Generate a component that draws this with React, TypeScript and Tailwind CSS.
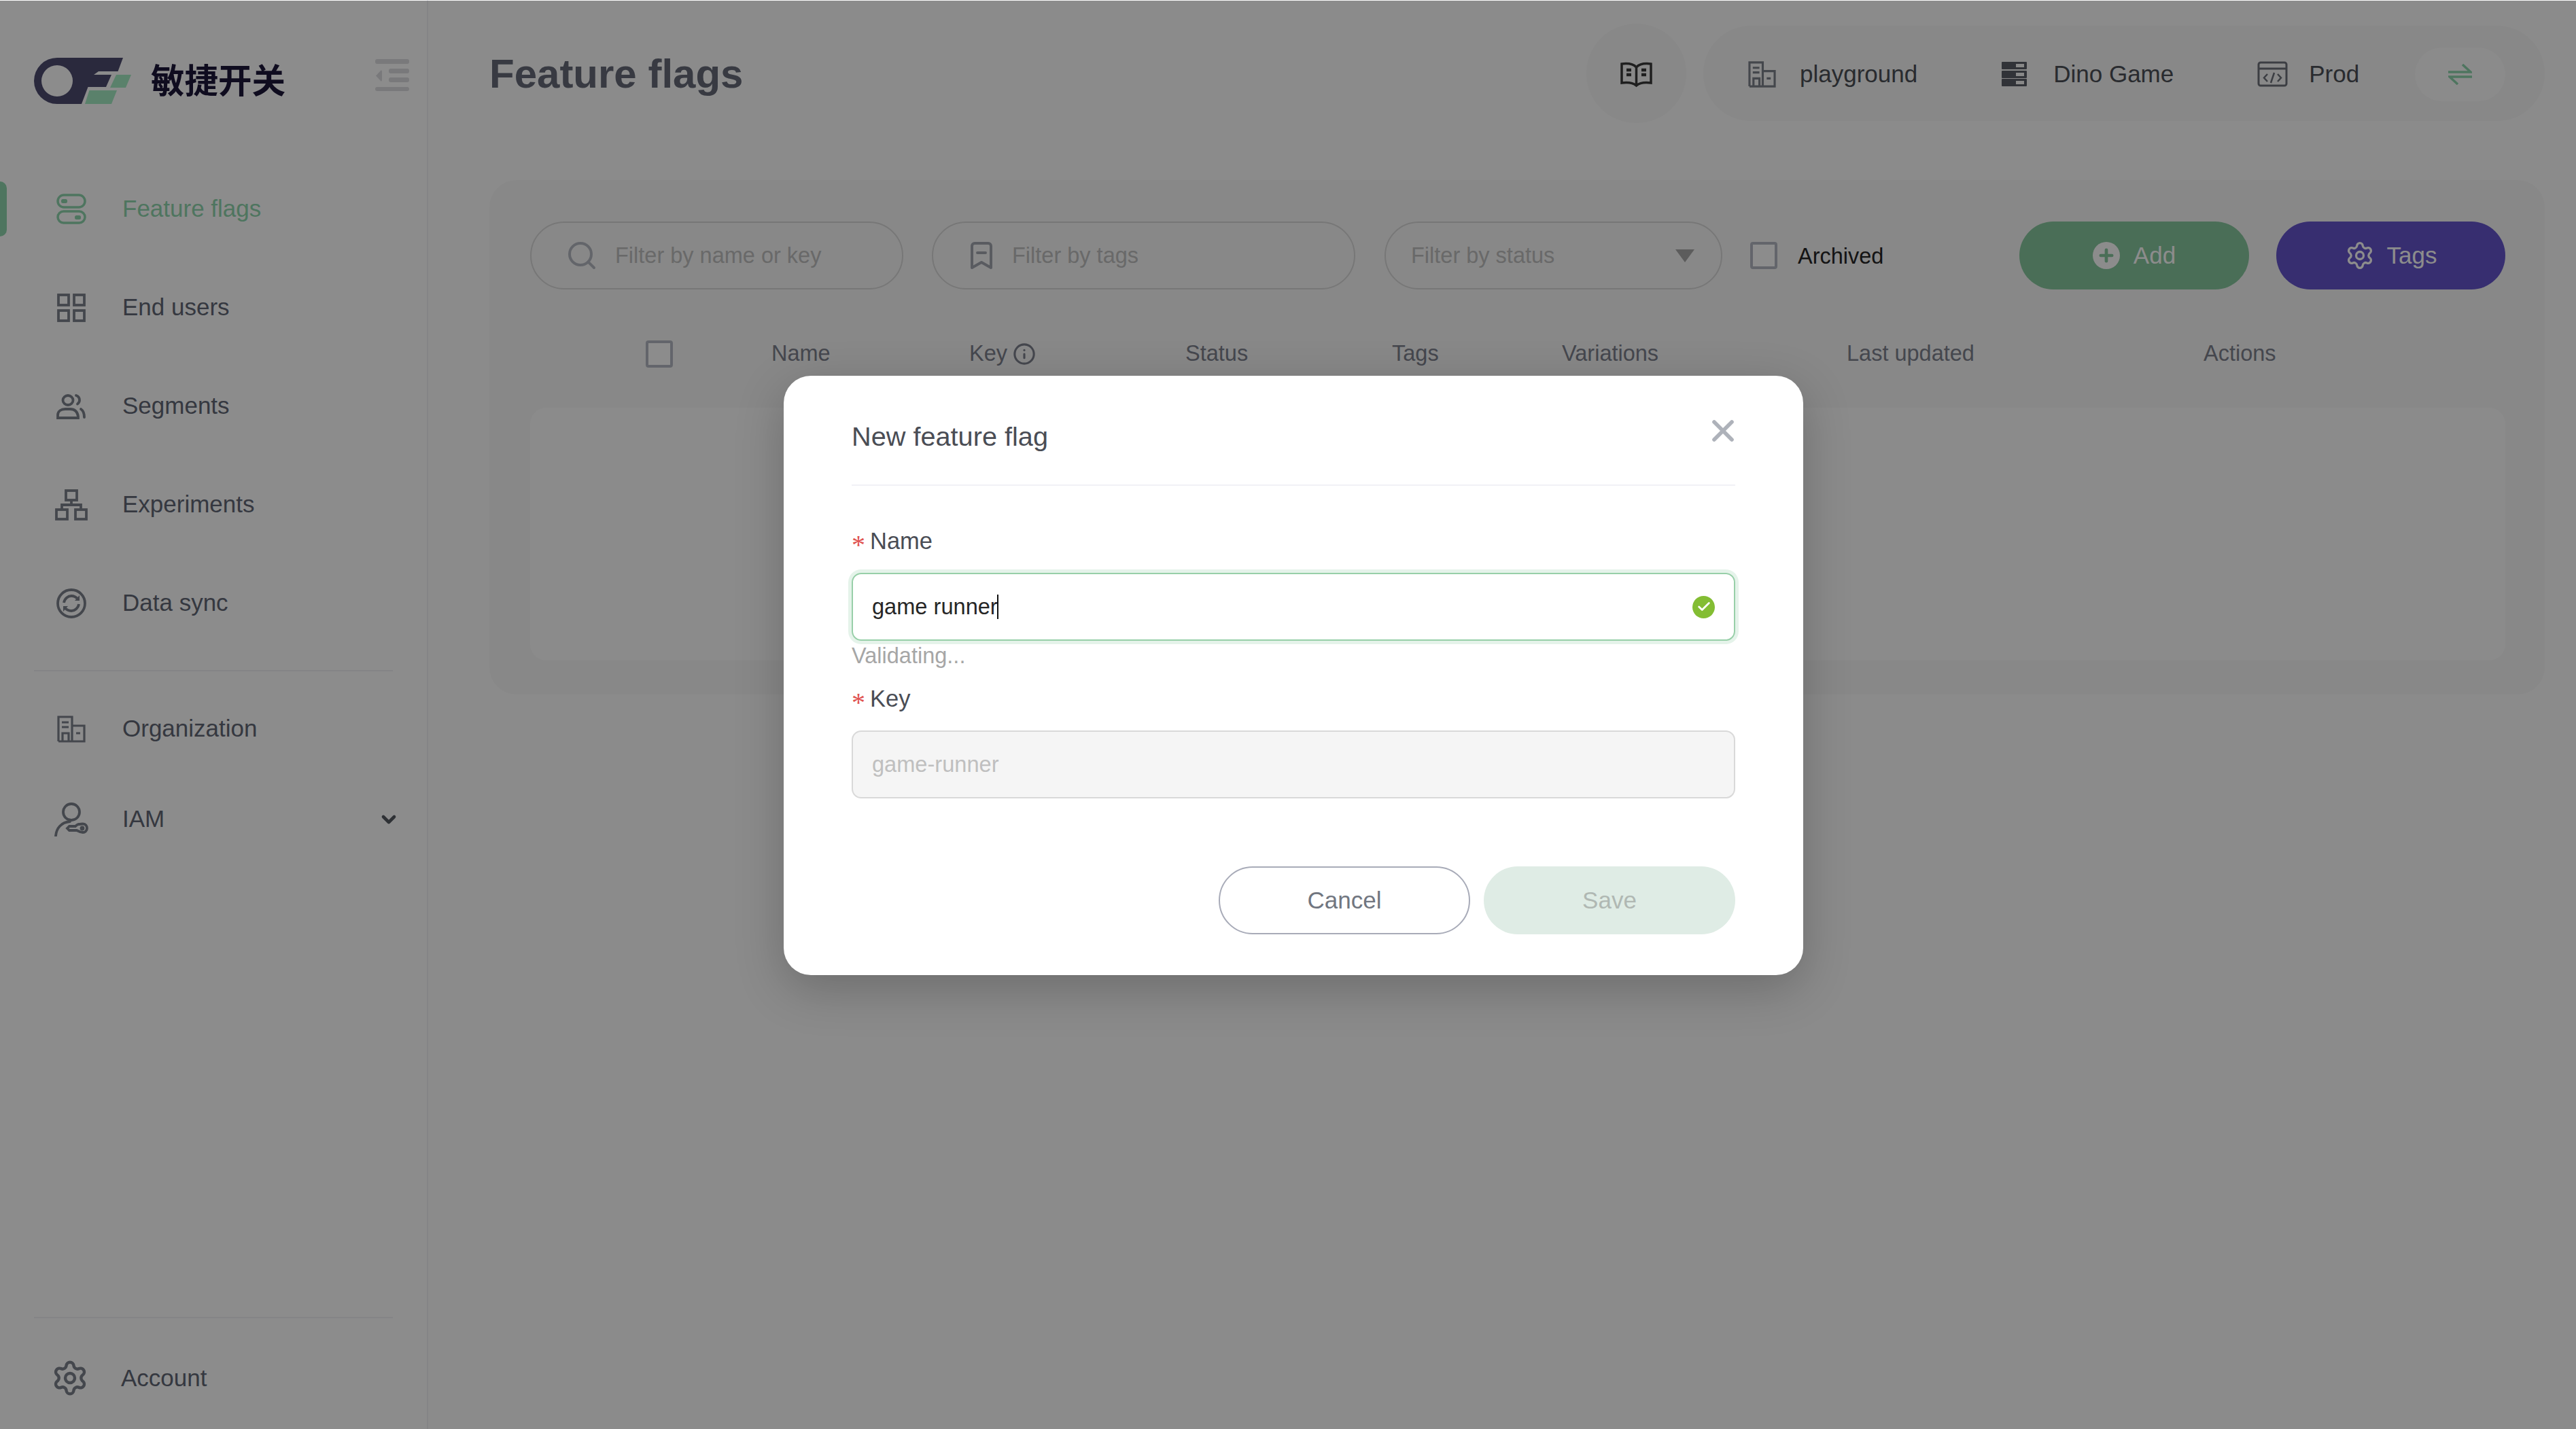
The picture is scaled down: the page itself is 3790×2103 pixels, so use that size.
import React from "react";
import { Search, BookmarkMinus, Settings, X, ChevronDown, Info, Plus, Check } from "lucide-react";

const FlagIcon = () => (
  <svg width="44" height="45" viewBox="0 0 44 45" fill="none">
    <rect x="2" y="2" width="40" height="18" rx="9" stroke="currentColor" strokeWidth="3.5" />
    <rect x="7" y="8" width="9" height="6" rx="2.5" fill="currentColor" />
    <rect x="2" y="26" width="40" height="17" rx="8.5" stroke="currentColor" strokeWidth="3.5" />
    <rect x="27" y="32" width="9" height="6" rx="2.5" fill="currentColor" />
  </svg>
);
const GridIcon = () => (
  <svg width="44" height="42" viewBox="0 0 44 42" fill="none" stroke="currentColor" strokeWidth="3.8">
    <rect x="3" y="2" width="15" height="15" />
    <rect x="26" y="2" width="15" height="15" />
    <rect x="3" y="25" width="15" height="15" />
    <rect x="26" y="25" width="15" height="15" />
  </svg>
);
const UsersIcon = () => (
  <svg width="44" height="38" viewBox="0 0 44 38" fill="none" stroke="currentColor" strokeWidth="3.8" strokeLinecap="round">
    <ellipse cx="17" cy="10" rx="7.5" ry="7" />
    <path d="M2 36v-4c0-6 5-9 11-9h7c7 0 11 4 12 11v2z" />
    <path d="M29 3c3 1 5 3.500 5 7 0 2-1 4-3 5.500" />
    <path d="M36 23c3 2 5 6 5 12" />
  </svg>
);
const TreeIcon = () => (
  <svg width="48" height="46" viewBox="0 0 48 46" fill="none" stroke="currentColor" strokeWidth="3.8">
    <rect x="16" y="2" width="16" height="14" />
    <rect x="2" y="30" width="16" height="14" />
    <rect x="30" y="30" width="16" height="14" />
    <path d="M24 16v7M10 30v-7h28v7" />
  </svg>
);
const SyncIcon = () => (
  <svg width="44" height="44" viewBox="0 0 44 44" fill="none" stroke="currentColor" strokeWidth="3.8">
    <circle cx="22" cy="22" r="20" />
    <path d="M11 21c1-6 6-10 11-10 4 0 7 1.500 10 5" />
    <path d="M33 23c-1 6-6 10-11 10-4 0-7-1.500-10-5" />
    <path d="M34 10v8h-7zM10 34v-8h7z" fill="currentColor" stroke="none" />
  </svg>
);
const OrgIcon = ({ w = 42, h = 40 }: { w?: number; h?: number }) => (
  <svg width={w} height={h} viewBox="0 0 42 40" fill="none" stroke="currentColor" strokeWidth="3.200">
    <path d="M2 38V2h20v36" />
    <path d="M22 15h18v23H2" />
    <path d="M7 10h10M7 17h10M8 38V26h9v12M28 26h6" />
  </svg>
);
const IamIcon = () => (
  <svg width="50" height="50" viewBox="0 0 50 50" fill="none" stroke="currentColor" strokeWidth="3.800" strokeLinecap="round">
    <circle cx="25" cy="14" r="12" />
    <path d="M2 49c1-11 8-20 21-21" />
    <path d="M36 32c2 0 4-.5 6-.500 4 0 6 3 6 6.500s-3 6-6 6c-4 0-7-2-9-3H22l-3-3 3-3h9c1-1 3-3 5-3z" />
    <circle cx="41" cy="38" r="1.500" fill="currentColor" />
  </svg>
);
const BookIcon = () => (
  <svg width="47" height="38" viewBox="0 0 47 38" fill="none" stroke="currentColor" strokeWidth="3.500">
    <path d="M23.500 8C19 3 10 2 2 3v28c8-1 17 0 21.500 4C28 31 37 30 45 31V3c-8-1-17 0-21.500 5zM23.500 8v27" />
    <path d="M9 12h7M9 19h7M31 12h7M31 19h7" strokeWidth="4.500" />
  </svg>
);
const ServerIcon = () => (
  <svg width="37" height="36" viewBox="0 0 37 36" fill="currentColor">
    <path fillRule="evenodd" d="M1 0h35a1 1 0 0 1 1 1v9a1 1 0 0 1-1 1H1a1 1 0 0 1-1-1V1a1 1 0 0 1 1-1zm20 3v5h12V3zM1 13h35a1 1 0 0 1 1 1v9a1 1 0 0 1-1 1H1a1 1 0 0 1-1-1v-9a1 1 0 0 1 1-1zm20 3v5h12v-5zM1 25h35a1 1 0 0 1 1 1v9a1 1 0 0 1-1 1H1a1 1 0 0 1-1-1v-9a1 1 0 0 1 1-1zm20 3v5h12v-5z" />
  </svg>
);
const CodeWinIcon = () => (
  <svg width="45" height="38" viewBox="0 0 45 38" fill="none" stroke="currentColor" strokeWidth="3">
    <rect x="2" y="2" width="41" height="34" rx="3" />
    <path d="M2 11h41" />
    <path d="M15 19l-5 5.500 5 5.500M30 19l5 5.500-5 5.500M25 17l-5 15" strokeWidth="2.500" />
  </svg>
);
const SwapIcon = () => (
  <svg width="35" height="31" viewBox="0 0 35 31" fill="none" stroke="currentColor" strokeWidth="3.500">
    <path d="M0 12h33L21 1M35 19H2l12 11" />
  </svg>
);

const Logo = () => (
  <svg width="143" height="68" viewBox="50 85 143 68">
    <path
      fillRule="evenodd"
      fill="#4e4c70"
      d="M84 85H181L173.500 105H145L138 110H164L156 128H129.500L120 153H84A34 34 0 0 1 84 85ZM84 96A23 23 0 1 0 84 142A23 23 0 1 0 84 96Z"
    />
    <path fill="#a5ecc3" d="M171 110H193L185 129H162ZM131.400 133H172L164 153H125Z" />
  </svg>
);

const CollapseIcon = () => (
  <svg width="50" height="47" viewBox="0 0 50 47" fill="#dcdce0">
    <rect x="0" y="0" width="50" height="7" rx="3" />
    <rect x="20" y="14" width="30" height="7" rx="3" />
    <rect x="20" y="27" width="30" height="7" rx="3" />
    <rect x="0" y="41" width="50" height="6" rx="3" />
    <path d="M9 16L1 24.500 9 33 10 31V18z" />
  </svg>
);

function NavItem({
  icon,
  label,
  active,
  heightClass,
  trailing,
}: {
  icon: React.ReactNode;
  label: string;
  active?: boolean;
  heightClass: string;
  trailing?: React.ReactNode;
}) {
  return (
    <div
      className={`relative flex items-center pl-[83px] pr-[40px] text-[35px] ${heightClass} ${
        active ? "text-[#8fd6ae]" : "text-[#626775]"
      }`}
    >
      {active && <div className="absolute left-0 top-[32px] h-[81px] w-[10px] rounded-r-[10px] bg-[#8fd6ae]" />}
      <div className={`flex h-[50px] w-[44px] items-center justify-center [&>svg]:shrink-0 ${active ? "text-[#8fd6ae]" : "text-[#7d828c]"}`}>{icon}</div>
      <span className="ml-[53px]">{label}</span>
      {trailing && <div className="ml-auto">{trailing}</div>}
    </div>
  );
}

function Sidebar() {
  return (
    <aside className="flex h-full w-[630px] shrink-0 flex-col border-r-2 border-[#f0f0f4] bg-white">
      <div className="flex h-[235px] shrink-0 items-start pl-[50px] pr-[26px] pt-[85px]">
        <Logo />
        <span className="ml-[29px] mt-[2px] font-['Noto_Sans_CJK_SC',sans-serif] text-[49.500px] font-bold leading-[58px] text-[#1d163a]">
          敏捷开关
        </span>
        <div className="ml-auto mt-[2px]">
          <CollapseIcon />
        </div>
      </div>
      <NavItem active heightClass="h-[145px]" icon={<FlagIcon />} label="Feature flags" />
      <NavItem heightClass="h-[145px]" icon={<GridIcon />} label="End users" />
      <NavItem heightClass="h-[145px]" icon={<UsersIcon />} label="Segments" />
      <NavItem heightClass="h-[145px]" icon={<TreeIcon />} label="Experiments" />
      <NavItem heightClass="h-[145px]" icon={<SyncIcon />} label="Data sync" />
      <div className="mx-[50px] mt-[26px] h-[2px] bg-[#f0f0f4]" />
      <div className="h-[18px]" />
      <NavItem heightClass="h-[133px]" icon={<OrgIcon />} label="Organization" />
      <NavItem
        heightClass="h-[133px]"
        icon={<IamIcon />}
        label="IAM"
        trailing={<ChevronDown size={32} strokeWidth={3.5} className="text-[#555962]" />}
      />
      <div className="mx-[50px] mt-auto h-[2px] bg-[#f0f0f4]" />
      <div className="flex h-[163px] shrink-0 items-start pl-[80px] pt-[66px]">
        <div className="flex h-[44px] w-[46px] items-center justify-center text-[#7d828c]">
          <Settings size={56} strokeWidth={1.9} className="shrink-0" />
        </div>
        <span className="ml-[52px] text-[35px] leading-[44px] text-[#626775]">Account</span>
      </div>
    </aside>
  );
}

function Header() {
  return (
    <header className="flex h-[140px] items-center">
      <h1 className="pt-[2px] text-[60px] font-bold text-[#666b79]">Feature flags</h1>
      <div className="ml-auto flex h-[146px] w-[147px] items-center justify-center rounded-full bg-[#f7f7f7] pt-[3px] text-[#3a3a3a]">
        <BookIcon />
      </div>
      <div className="ml-[25px] flex h-[140px] w-[1238px] items-center rounded-full bg-[#f7f7f7] pl-[66px] pt-[2px] text-[35px] text-[#4b4f56]">
        <span className="text-[#7d818b]">
          <OrgIcon w={41} h={41} />
        </span>
        <span className="ml-[35px]">playground</span>
        <span className="ml-[124px] text-[#5a5e66]">
          <ServerIcon />
        </span>
        <span className="ml-[39px]">Dino Game</span>
        <span className="ml-[123px] text-[#6e727b]">
          <CodeWinIcon />
        </span>
        <span className="ml-[31px]">Prod</span>
        <div className="ml-[82px] flex h-[79px] w-[133px] items-center justify-center rounded-[40px] bg-[#fdfdfd] text-[#8fd6ae]">
          <SwapIcon />
        </div>
      </div>
    </header>
  );
}

function FilterBox({ widthClass, children }: { widthClass: string; children: React.ReactNode }) {
  return (
    <div className={`flex h-[100px] shrink-0 items-center rounded-full border-2 border-[#d9d9d9] text-[32.500px] text-[#bfbfbf] ${widthClass}`}>
      {children}
    </div>
  );
}

function Panel() {
  const columns = ["Name", "Key", "Status", "Tags", "Variations", "Last updated", "Actions"];
  return (
    <section className="mt-[87px] flex h-[757px] flex-col rounded-[40px] bg-[#f8f8f8] pl-[60px] pr-[58px] pt-[61px]">
      <div className="flex h-[100px] items-center">
        <FilterBox widthClass="w-[549px] pl-[50px]">
          <Search size={48} strokeWidth={2} className="text-[#b5b9c2]" />
          <span className="ml-[25px]">Filter by name or key</span>
        </FilterBox>
        <FilterBox widthClass="ml-[42px] w-[623px] pl-[47px]">
          <BookmarkMinus size={48} strokeWidth={2} className="text-[#a2a6b0]" />
          <span className="ml-[21px]">Filter by tags</span>
        </FilterBox>
        <FilterBox widthClass="ml-[43px] w-[497px] pl-[37px] pr-[39px]">
          <span>Filter by status</span>
          <svg className="ml-auto" width="28" height="19" viewBox="0 0 28 19" fill="#a8a8a8">
            <path d="M0 0h28L14 19z" />
          </svg>
        </FilterBox>
        <div className="ml-[41px] h-[40px] w-[40px] rounded-[4px] border-[4px] border-[#b5b9c4] bg-white" />
        <span className="ml-[30px] pt-[2px] text-[32.500px] text-[#262626]">Archived</span>
        <button className="ml-auto flex h-[100px] w-[338px] items-center justify-center rounded-full bg-[#87c89e] text-[35px] text-white">
          <span className="flex h-[40px] w-[40px] items-center justify-center rounded-full bg-white text-[#87c89e]">
            <Plus size={28} strokeWidth={4} />
          </span>
          <span className="ml-[20px] pt-[1px]">Add</span>
        </button>
        <button className="ml-[40px] flex h-[100px] w-[337px] items-center justify-center rounded-full bg-[#6454cc] text-[35px] text-white">
          <Settings size={44} strokeWidth={1.8} className="shrink-0" />
          <span className="ml-[18px] pt-[1px]">Tags</span>
        </button>
      </div>
      <div className="grid h-[174px] grid-cols-[185px_291px_318px_304px_250px_419px_525px_1fr] items-center pl-[170px] pt-[15px] text-[32.500px] text-[#7e828e]">
        <div className="h-[40px] w-[40px] rounded-[4px] border-[4px] border-[#b5b9c4] bg-white" />
        {columns.map((c) => (
          <div key={c} className="flex items-center">
            {c}
            {c === "Key" && <Info size={34} strokeWidth={2.2} className="ml-[8px]" />}
          </div>
        ))}
      </div>
      <div className="h-[372px] rounded-[24px] bg-[#fdfdfd]" />
    </section>
  );
}

function Label({ text }: { text: string }) {
  return (
    <div className="flex h-[44px] items-center text-[34.500px] text-[#4a4d55]">
      <span className="mr-[10px] w-[17px] translate-y-[5px] font-['Liberation_Serif',serif] text-[40px] leading-[44px] text-[#e0524f]">*</span>
      {text}
    </div>
  );
}

function Modal() {
  return (
    <div className="absolute inset-0 top-[1px] bg-black/45 pl-[16px] pt-[552px]">
      <div className="mx-auto h-[882px] w-[1500px] rounded-[40px] bg-white px-[100px] pt-[64px] shadow-[0_20px_70px_rgba(0,0,0,0.22)]">
        <div className="relative h-[98px] border-b-2 border-[#f1f1f6]">
          <div className="text-[39.700px] leading-[50px] text-[#4a4d55]">New feature flag</div>
          <X size={52} strokeWidth={2.6} className="absolute right-[-8px] top-[-9px] text-[#aeb2ba]" />
        </div>
        <div className="mt-[60px]">
          <Label text="Name" />
        </div>
        <div className="mt-[24px] flex h-[100px] items-center rounded-[14px] border-2 border-[#97cfa8] pl-[28px] pr-[28px] text-[32.600px] text-[#262626] shadow-[0_0_0_5px_#e5f3ea]">
          <span>game runner</span>
          <span className="ml-[-1px] h-[36px] w-[2px] bg-[#111]" />
          <span className="ml-auto flex h-[33px] w-[33px] items-center justify-center rounded-full bg-[#83bd33] text-white">
            <Check size={22} strokeWidth={3} />
          </span>
        </div>
        <div className="flex h-[44px] items-center text-[32.500px] text-[#a6a6a6]">Validating...</div>
        <div className="mt-[20px]">
          <Label text="Key" />
        </div>
        <div className="mt-[24px] flex h-[100px] items-center rounded-[14px] border-2 border-[#d9d9d9] bg-[#f5f5f5] pl-[28px] text-[32.600px] text-[#bfbfbf]">
          game-runner
        </div>
        <div className="mt-[100px] flex justify-end gap-[20px]">
          <button className="h-[100px] w-[370px] rounded-full border-2 border-[#a8abb8] text-[35px] text-[#717680]">Cancel</button>
          <button className="h-[100px] w-[370px] rounded-full bg-[#dfece5] text-[35px] text-[#b0b8b3]">Save</button>
        </div>
      </div>
    </div>
  );
}

export default function App() {
  return (
    <div className="relative flex h-[2103px] w-[3790px] overflow-hidden bg-white font-['Liberation_Sans',Arial,sans-serif]">
      <Sidebar />
      <main className="min-w-0 flex-1 bg-[#fdfdfd] pl-[90px] pr-[46px] pt-[38px]">
        <Header />
        <Panel />
      </main>
      <Modal />
    </div>
  );
}
